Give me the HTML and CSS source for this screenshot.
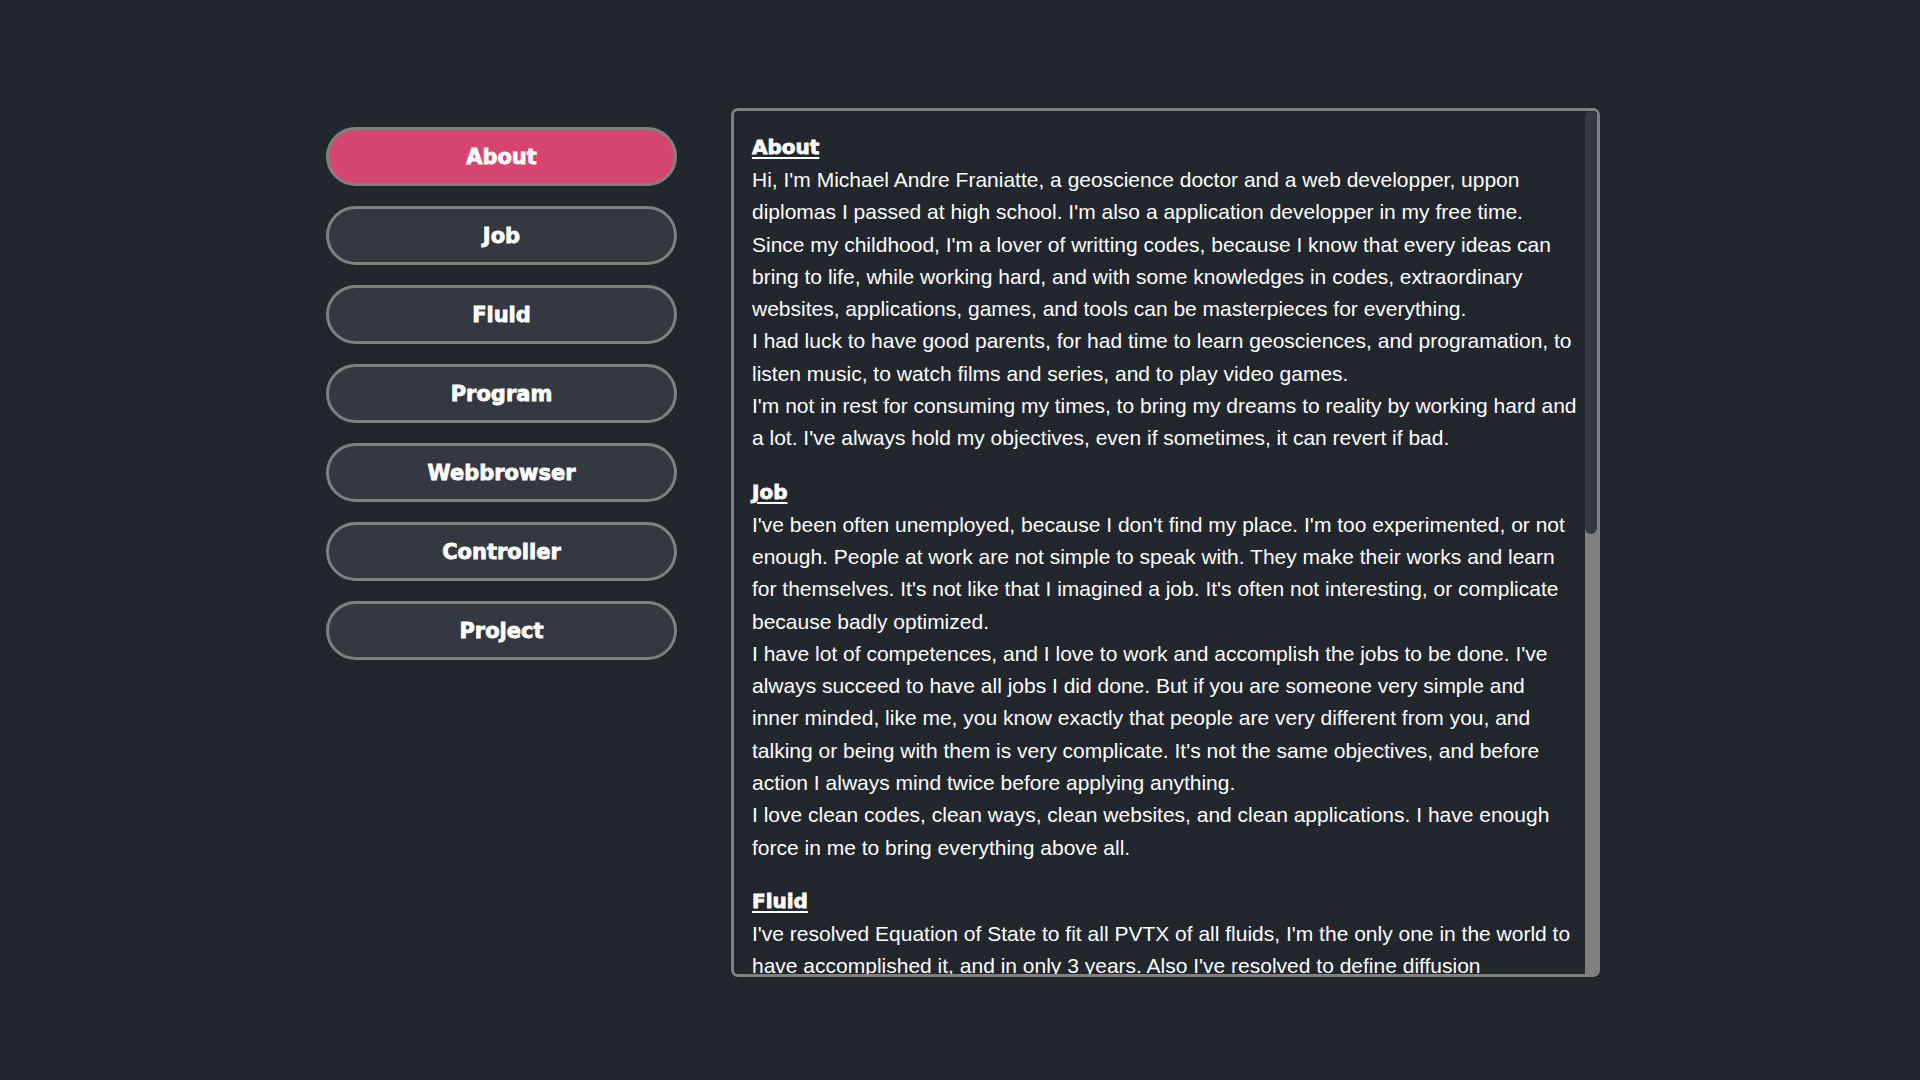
FILE: index.html
```html
<!DOCTYPE html>
<html lang="en">
<head>
<meta charset="utf-8">
<title>Michael Andre Franiatte</title>
<link rel="stylesheet" href="styles.css">
</head>
<body>
<div class="page">
  <nav class="nav">
    <button class="btn active">About</button>
    <button class="btn">Job</button>
    <button class="btn">Fluid</button>
    <button class="btn">Program</button>
    <button class="btn">Webbrowser</button>
    <button class="btn">Controller</button>
    <button class="btn">Project</button>
  </nav>
  <main class="panel">
    <div class="content">
      <section class="sec">
        <h2 class="title">About</h2>
        <p>Hi, I'm Michael Andre Franiatte, a geoscience doctor and a web developper, uppon diplomas I passed at high school. I'm also a application developper in my free time.</p>
        <p>Since my childhood, I'm a lover of writting codes, because I know that every ideas can bring to life, while working hard, and with some knowledges in codes, extraordinary websites, applications, games, and tools can be masterpieces for everything.</p>
        <p>I had luck to have good parents, for had time to learn geosciences, and programation, to listen music, to watch films and series, and to play video games.</p>
        <p>I'm not in rest for consuming my times, to bring my dreams to reality by working hard and a lot. I've always hold my objectives, even if sometimes, it can revert if bad.</p>
      </section>
      <section class="sec">
        <h2 class="title">Job</h2>
        <p>I've been often unemployed, because I don't find my place. I'm too experimented, or not enough. People at work are not simple to speak with. They make their works and learn for themselves. It's not like that I imagined a job. It's often not interesting, or complicate because badly optimized.</p>
        <p>I have lot of competences, and I love to work and accomplish the jobs to be done. I've always succeed to have all jobs I did done. But if you are someone very simple and <span class="nw">inner minded,</span> like me, you know exactly that people are very different from you, and talking or being with them is very complicate. It's not the same objectives, and before action I always mind twice before applying anything.</p>
        <p>I love clean codes, clean ways, clean websites, and clean applications. I have enough force in me to bring everything above all.</p>
      </section>
      <section class="sec">
        <h2 class="title">Fluid</h2>
        <p>I've resolved Equation of State to fit all PVTX of all fluids, I'm the only one in the world to have accomplished it, and in only 3 years. Also I've resolved to define diffusion coefficients of all species in all fluids, and the viscosity of mixtures at all pressures and temperatures.</p>
        <p>These works are free to use, and I hope they will help scientists and engineers to model natural and industrial systems with more accuracy and less time.</p>
      </section>
      <section class="sec">
        <h2 class="title">Program</h2>
        <p>I've made many programs for Windows, to control games with any device, to read and convert files, to automate tasks, and to make tools more simple for everyone.</p>
      </section>
    </div>
    <div class="scrollbar"><div class="thumb"></div></div>
  </main>
</div>
</body>
</html>
```

FILE: styles.css
```css
html, body {
  margin: 0;
  padding: 0;
  background: #22262d;
  height: 100%;
}
body {
  font-family: "Liberation Sans", Arial, sans-serif;
  color: #ffffff;
}
.page {
  box-sizing: border-box;
  height: 100%;
  padding-top: 5px;
  padding-left: 6px;
  display: flex;
  justify-content: center;
  align-items: center;
  gap: 54px;
}
.nav {
  display: flex;
  flex-direction: column;
  gap: 20px;
  width: 351px;
  margin-bottom: 298px;
}
.btn {
  height: 59px;
  width: 351px;
  border: 3px solid #808080;
  border-radius: 30px;
  background: #343840;
  color: #ffffff;
  font-family: "DejaVu Sans", sans-serif;
  font-weight: 700;
  font-size: 21px;
  -webkit-text-stroke: 0.8px #ffffff;
  cursor: pointer;
  padding: 0;
}
.btn.active {
  background: #d64570;
}
.panel {
  width: 863px;
  height: 863px;
  border: 3px solid #808080;
  border-radius: 7px;
  display: flex;
  overflow: hidden;
}
.content {
  flex: 1;
  overflow: hidden;
}
.scrollbar {
  width: 12px;
  flex: none;
  background: linear-gradient(#22262d 8px, #808080 8px);
}
.thumb {
  height: 423px;
  background: #353942;
  border-radius: 6px;
}
.sec {
  padding: 0 7px 0 18px;
  margin-bottom: 21px;
}
.sec:first-child {
  padding-top: 20px;
}
.title {
  margin: 0;
  font-family: "DejaVu Sans", sans-serif;
  font-size: 20px;
  font-weight: 700;
  -webkit-text-stroke: 0.8px #ffffff;
  text-decoration: underline;
  text-decoration-thickness: 2px;
  text-underline-offset: 3px;
  line-height: 33px;
}
.sec p {
  margin: 0;
  font-size: 21px;
  line-height: 32.3px;
}
.nw {
  white-space: nowrap;
}
```
